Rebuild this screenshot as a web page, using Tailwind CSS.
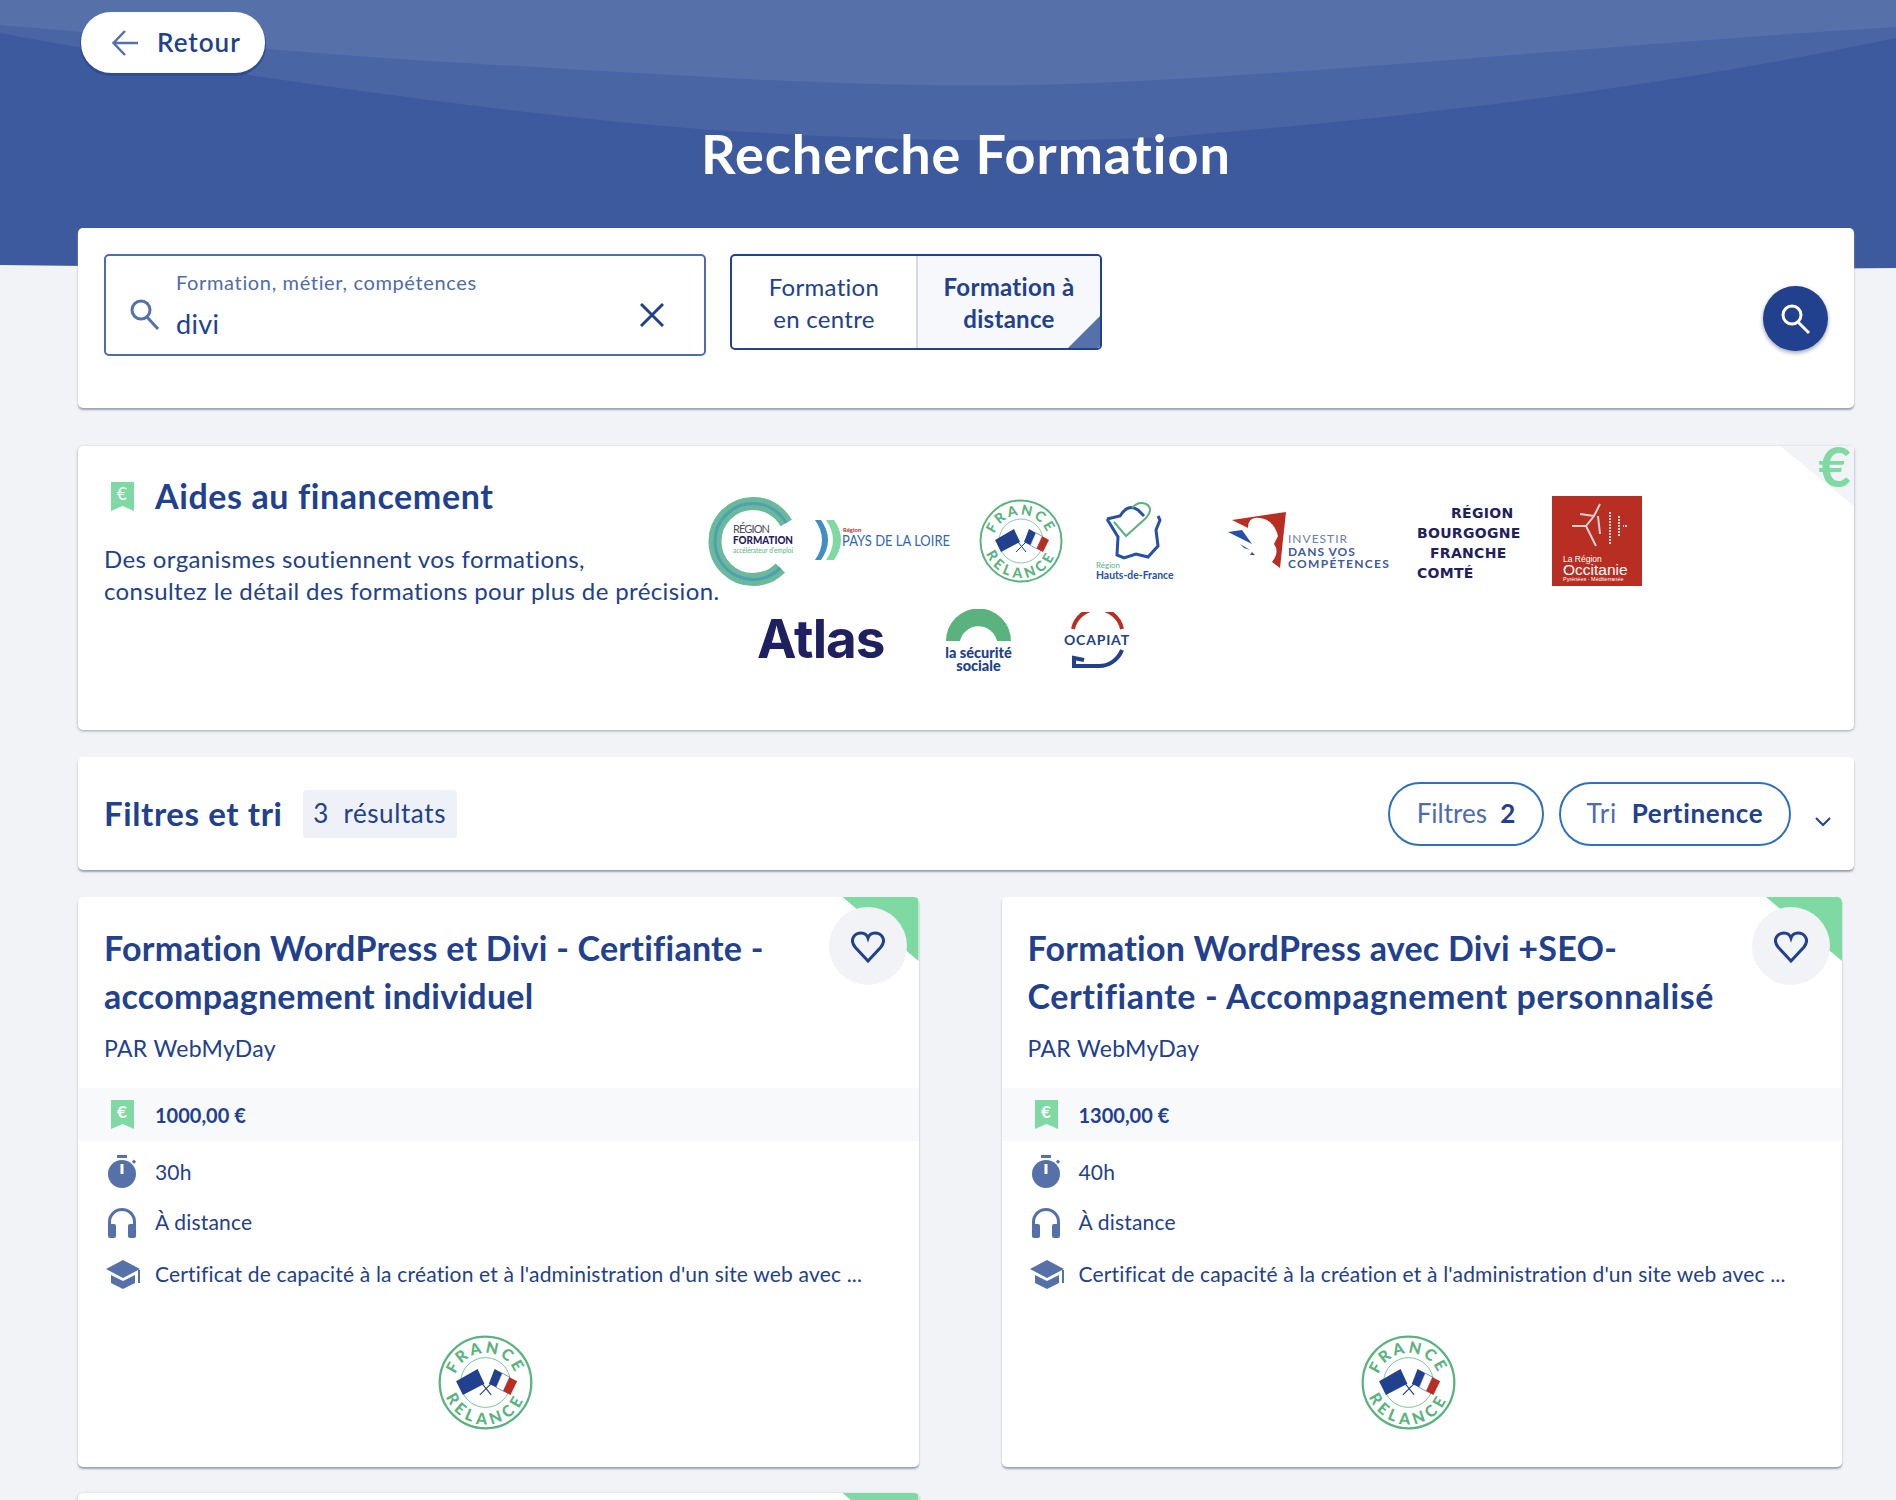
<!DOCTYPE html>
<html lang="fr">
<head>
  <meta charset="UTF-8">
  <meta name="viewport" content="width=device-width, initial-scale=1.0">
  <title>Recherche Formation</title>
  <script src="https://cdn.jsdelivr.net/npm/@tailwindcss/browser@4"></script>
</head>
<body class="bg-[#f1f3f7] font-['Lato',sans-serif] text-[#21408e] [font-variant-ligatures:none]">

  <!-- Icones et logos reutilises -->
  <svg class="hidden" width="0" height="0">
    <defs>
      <symbol id="relance" viewBox="0 0 84 84">
        <circle cx="42" cy="42" r="40.5" fill="#fff" stroke="#5ab37f" stroke-width="2"/>
        <circle cx="42" cy="42" r="22" fill="none" stroke="#5ab37f" stroke-width="0.7"/>
        <path id="arcTop" d="M14 44 A28 28 0 0 1 70 44" fill="none"/>
        <path id="arcBottom" d="M5 42 A37 37 0 0 0 79 42" fill="none"/>
        <text font-family="Lato, sans-serif" font-size="14" font-weight="900" fill="#5ab37f" letter-spacing="2.4"><textPath href="#arcTop" startOffset="50%" text-anchor="middle">FRANCE</textPath></text>
        <text font-family="Lato, sans-serif" font-size="14" font-weight="900" fill="#5ab37f" letter-spacing="4"><textPath href="#arcBottom" startOffset="50%" text-anchor="middle">RELANCE</textPath></text>
        <path d="M35 30 L41 43 L22 53 L16 41 Z" fill="#21408e"/>
        <path d="M45 43 L50 30 L56.7 33.7 L51.3 46.3 Z" fill="#21408e"/>
        <path d="M51.3 46.3 L56.7 33.7 L63.3 37.3 L57.7 49.7 Z" fill="#fff" stroke="#21408e" stroke-width="0.5"/>
        <path d="M57.7 49.7 L63.3 37.3 L70 41 L64 53 Z" fill="#b92e22"/>
        <path d="M47 43 L37 53 M39 43 L47 53" stroke="#21408e" stroke-width="1"/>
      </symbol>
      <symbol id="bookmark" viewBox="0 0 23 29">
        <path d="M0 0 H23 V29 L11.5 24 L0 29 Z" fill="#7fd9a2"/>
        <text x="11" y="18" text-anchor="middle" font-family="Lato, sans-serif" font-size="17" fill="#fff">€</text>
      </symbol>
      <symbol id="stopwatch" viewBox="0 0 30 34">
        <rect x="9" y="0" width="10" height="3" fill="#5670aa"/>
        <circle cx="14" cy="19" r="14" fill="#5670aa"/>
        <rect x="25" y="5" width="3" height="3" fill="#5670aa" transform="rotate(45 26 6)"/>
        <rect x="12.5" y="9" width="3" height="10" fill="#fff"/>
      </symbol>
      <symbol id="headphones" viewBox="0 0 30 31">
        <path d="M2.5 19 V15 A12.5 12.5 0 0 1 27.5 15 V19" fill="none" stroke="#5670aa" stroke-width="3"/>
        <rect x="1" y="17" width="8" height="14" rx="2" fill="#5670aa"/>
        <rect x="21" y="17" width="8" height="14" rx="2" fill="#5670aa"/>
      </symbol>
      <symbol id="cap" viewBox="0 0 36 29">
        <path d="M18 0 L35 9 L18 18 L1 9 Z" fill="#5670aa"/>
        <path d="M6 15 L18 21 L30 15 V23 L18 29 L6 23 Z" fill="#5670aa"/>
        <rect x="33" y="10" width="2" height="13" fill="#5670aa"/>
      </symbol>
    </defs>
  </svg>

  <div class="relative h-[1500px] overflow-hidden">

    <!-- Fond du bandeau -->
    <svg class="absolute top-0 left-0" width="1896" height="272" viewBox="0 0 1896 272">
      <path d="M0 0 H1896 V268 Q948 276 0 265 Z" fill="#3e5a9e"/>
      <path d="M0 33 C120 55 260 80 535 113 C760 140 1000 145 1171 137 C1400 118 1650 90 1896 38 V0 H0 Z" fill="#4a65a4"/>
      <path d="M0 25 C180 40 300 55 535 67 C720 78 900 90 1070 84 C1300 76 1600 45 1896 27 V0 H0 Z" fill="#5670aa"/>
    </svg>

    <main class="relative px-[78px] pr-[42px]">

      <!-- Retour -->
      <div class="pt-[12px] pl-[3px]">
        <button class="flex items-center w-[184px] h-[61px] pl-[31px] gap-[19px] bg-white rounded-[30px] shadow-[0_2px_0_1px_#2f4c93]">
          <svg width="26" height="26" viewBox="0 0 26 26" fill="none" stroke="#5670aa" stroke-width="2.5"><path d="M13 1 L1.5 13 L13 25 M2 13 H26"/></svg>
          <span class="text-[26px] font-semibold tracking-[1px]">Retour</span>
        </button>
      </div>

      <h1 class="mt-[46px] w-[1776px] text-center text-white text-[54px] leading-[70px] font-bold tracking-[0.95px]">Recherche Formation</h1>

      <!-- Recherche -->
      <section class="mt-[39px] w-[1776px] h-[180px] bg-white rounded-[5px] shadow-[0_2px_2px_#9ba2b3] p-[26px] flex items-start relative">
        <div class="w-[602px] h-[102px] border-2 border-[#4d6bad] rounded-[5px] flex items-center pl-[24px] pr-[40px]">
          <svg class="mt-[20px]" width="30" height="32" viewBox="0 0 30 32" fill="none" stroke="#5670aa" stroke-width="3"><circle cx="11" cy="11" r="9"/><path d="M17 18 L28 30"/></svg>
          <div class="ml-[16px] flex-1">
            <div class="text-[20px] leading-[24px] text-[#4d6bad] tracking-[0.65px]">Formation, métier, compétences</div>
            <div class="mt-[13px] text-[27px] leading-[34px] tracking-[0.3px]">divi</div>
          </div>
          <svg class="mt-[20px]" width="24" height="24" viewBox="0 0 24 24" fill="none" stroke="#21408e" stroke-width="3"><path d="M1 1 L23 23 M23 1 L1 23"/></svg>
        </div>
        <div class="ml-[24px] w-[372px] h-[96px] border-2 border-[#21408e] rounded-[5px] flex overflow-hidden text-[24px] leading-[32px] text-center tracking-[0.3px]">
          <div class="w-[186px] pt-[2px] flex items-center justify-center border-r-2 border-[#d5d9e4]">Formation<br>en centre</div>
          <div class="flex-1 pt-[2px] flex items-center justify-center bg-[#f7f8fb] font-bold relative">Formation à<br>distance
            <span class="absolute right-0 bottom-0 w-[32px] h-[32px] bg-[#5670aa] [clip-path:polygon(100%_0,100%_100%,0_100%)]"></span>
          </div>
        </div>
        <button class="ml-auto mt-[32px] w-[65px] h-[65px] rounded-full bg-[#21408e] shadow-[0_2px_4px_#9ba2b3] flex items-center justify-center">
          <svg width="32" height="32" viewBox="0 0 32 32" fill="none" stroke="#fff" stroke-width="3"><circle cx="12" cy="12" r="9"/><path d="M18 19 L29 30"/></svg>
        </button>
      </section>

      <!-- Aides au financement -->
      <section class="mt-[38px] w-[1776px] h-[284px] bg-white rounded-[5px] shadow-[0_1px_3px_#9ba2b3] relative flex pl-[26px]">
        <span class="absolute right-0 top-0 w-[74px] h-[60px] bg-[#f1f3f7] [clip-path:polygon(0_0,100%_0,100%_100%)]"></span>
        <span class="absolute right-[3px] top-[-7px] text-[#7fd9a2] text-[56px] leading-[54px] font-bold">€</span>
        <div class="w-[604px] shrink-0">
          <div class="mt-[30px] flex items-center">
            <svg class="ml-[7px]" width="23" height="29"><use href="#bookmark"/></svg>
            <h2 class="ml-[21px] text-[34px] leading-[40px] font-bold tracking-[0.6px]">Aides au financement</h2>
          </div>
          <p class="mt-[27px] text-[24px] leading-[32px] whitespace-nowrap tracking-[0.38px]">Des organismes soutiennent vos formations,<br>consultez le détail des formations pour plus de précision.</p>
        </div>
        <div>
          <!-- Premiere ligne -->
          <div class="mt-[50px] flex items-start">
            <svg width="90" height="91" viewBox="0 0 90 91">
              <circle cx="45" cy="45.5" r="38" fill="none" stroke="#6ab99a" stroke-width="13" stroke-dasharray="190 49" transform="rotate(44 45 45.5)"/>
              <circle cx="45" cy="45.5" r="38" fill="none" stroke="#3f8fc4" stroke-opacity="0.6" stroke-width="3" stroke-dasharray="190 49" transform="rotate(44 45 45.5)"/>
              <text x="25" y="37" font-family="Lato, sans-serif" font-size="11" fill="#4a4f66" textLength="37">RÉGION</text>
              <text x="25" y="48" font-family="Lato, sans-serif" font-size="10.5" font-weight="900" fill="#1e2060" textLength="60" lengthAdjust="spacingAndGlyphs">FORMATION</text>
              <text x="25" y="57" font-family="Lato, sans-serif" font-size="7" fill="#5ab37f" textLength="60" lengthAdjust="spacingAndGlyphs">accélérateur d'emploi</text>
            </svg>
            <svg class="ml-[15px] mt-[24px]" width="140" height="40" viewBox="0 0 140 40">
              <path d="M2 0 Q16 20 2 40 H8 Q22 20 8 0 Z" fill="#3f8fc4"/>
              <path d="M13 0 Q27 20 13 40 H21 Q35 20 21 0 Z" fill="#7fd9a2"/>
              <text x="30" y="12" font-family="Lato, sans-serif" font-size="6" font-weight="700" fill="#b92e22">Région</text>
              <text x="29" y="26" font-family="Lato, sans-serif" font-size="15" fill="#3368b3" textLength="108" lengthAdjust="spacingAndGlyphs">PAYS DE LA LOIRE</text>
            </svg>
            <svg class="ml-[26px] mt-[3px]" width="84" height="84"><use href="#relance"/></svg>
            <svg class="ml-[33px] mt-[6px]" width="80" height="80" viewBox="0 0 80 80">
              <path d="M11 17 L24 14 Q32 1 42 8 L48 14 M62 14 L64 18 L60 28 L62 44 L52 55 L40 52 L28 56 L21 53 L22 35 L11 17" fill="none" stroke="#2650a8" stroke-width="3"/>
              <path d="M18 20 L30 34 L50 16 Q58 6 50 2 Q42 -1 36 6" fill="none" stroke="#5ab37f" stroke-width="2"/>
              <text x="0" y="66" font-family="Lato, sans-serif" font-size="8" fill="#5ab37f">Région</text>
              <text x="0" y="77" font-family="Lato, sans-serif" font-size="10.4" font-weight="700" fill="#2650a8">Hauts-de-France</text>
            </svg>
            <svg class="ml-[52px] mt-[16px]" width="165" height="56" viewBox="0 0 165 56">
              <path d="M4 8 L58 0 L52 56 L44 50 Q52 40 46 32 L50 24 Q46 8 32 6 Q20 4 20 16 Z" fill="#b92e22"/>
              <path d="M0 20 L14 18 L24 32 Z" fill="#2650a8"/>
              <path d="M12 32 L22 38 L16 36 Z M24 40 L27 43 L22 43 Z" fill="#2650a8"/>
              <text x="60" y="31" font-family="Lato, sans-serif" font-size="12" letter-spacing="1" fill="#6a7ea8">INVESTIR</text>
              <text x="60" y="44" font-family="Lato, sans-serif" font-size="12" font-weight="700" letter-spacing="1" fill="#3d5a9e">DANS VOS</text>
              <text x="60" y="56" font-family="Lato, sans-serif" font-size="12" font-weight="700" letter-spacing="1.3" fill="#3d5a9e">COMPÉTENCES</text>
            </svg>
            <div class="ml-[24px] mt-[7px] w-[102px] font-['DejaVu_Sans',sans-serif] font-bold text-[14px] leading-[20px] text-[#1e2060] tracking-[0.3px]">
              <div class="pl-[34px]">RÉGION</div>
              <div>BOURGOGNE</div>
              <div class="pl-[13px]">FRANCHE</div>
              <div>COMTÉ</div>
            </div>
            <div class="ml-[33px] w-[90px] h-[90px] bg-[#b92e22] text-white relative">
              <svg class="absolute left-[18px] top-[6px]" width="58" height="50" viewBox="0 0 58 50" fill="none" stroke="#d9d3d0" stroke-width="2">
                <path d="M2 24 L16 24 L24 14 L30 2 M24 14 L10 12 M16 24 L26 44 M28 14 L30 32"/>
                <path d="M40 10 V42 M49 14 V34 M57 24 H53" stroke-dasharray="2 1"/>
              </svg>
              <div class="absolute left-[11px] top-[58px] text-[8.5px] leading-[10px] font-['Liberation_Sans',sans-serif]">La Région</div>
              <div class="absolute left-[11px] top-[66px] text-[15.5px] leading-[16px] font-['Liberation_Sans',sans-serif]">Occitanie</div>
              <div class="absolute left-[11px] top-[80px] text-[5.5px] leading-[7px] whitespace-nowrap font-['Liberation_Sans',sans-serif]">Pyrénées · Méditerranée</div>
            </div>
          </div>
          <!-- Deuxieme ligne -->
          <div class="mt-[22px] flex items-start">
            <div class="ml-[49px] mt-[2px] text-[#1e2060] text-[53px] leading-[56px] font-bold tracking-[-1px] font-['Inter',sans-serif]">Atlas</div>
            <svg class="ml-[61px]" width="67" height="64" viewBox="0 0 67 64">
              <path d="M1 32 A32 32 0 0 1 66 32 H52 A19 19 0 0 0 15 32 Z" fill="#5ab37f"/>
              <text x="33.5" y="49" text-anchor="middle" font-family="Lato, sans-serif" font-size="14.5" font-weight="900" fill="#21408e">la sécurité</text>
              <text x="33.5" y="62" text-anchor="middle" font-family="Lato, sans-serif" font-size="14.5" font-weight="900" fill="#21408e">sociale</text>
            </svg>
            <svg class="ml-[52px] mt-[3px]" width="67" height="56" viewBox="0 0 67 56">
              <path d="M9 17 A25 25 0 0 1 58 17" fill="none" stroke="#b92e22" stroke-width="4"/>
              <path d="M58 38 A25 25 0 0 1 34 54 L10 54 L10 46 L20 48" fill="none" stroke="#21408e" stroke-width="4"/>
              <text x="0" y="33" font-family="Lato, sans-serif" font-size="14" font-weight="700" letter-spacing="0.8" fill="#21408e">OCAPIAT</text>
            </svg>
          </div>
        </div>
      </section>

      <!-- Filtres et tri -->
      <section class="mt-[27px] w-[1776px] h-[113px] bg-white rounded-[5px] shadow-[0_2px_2px_#9ba2b3] flex items-center pl-[26px] pr-[23px]">
        <h2 class="text-[33px] font-bold tracking-[0.6px]">Filtres et tri</h2>
        <span class="ml-[20px] w-[154px] h-[48px] flex items-center justify-center bg-[#eef2f8] rounded-[4px] text-[26px] whitespace-pre tracking-[0.6px]">3  résultats</span>
        <button class="ml-auto w-[156px] h-[64px] rounded-[32px] border-2 border-[#2f6fc0] text-[26px] whitespace-pre text-[#4d6bad]">Filtres  <b class="text-[#21408e]">2</b></button>
        <button class="ml-[15px] w-[232px] h-[64px] rounded-[32px] border-2 border-[#2f6fc0] text-[26px] whitespace-pre text-[#4d6bad] tracking-[0.7px]">Tri  <b class="text-[#21408e]">Pertinence</b></button>
        <svg class="ml-[24px] mt-[16px]" width="16" height="10" viewBox="0 0 16 10" fill="none" stroke="#21408e" stroke-width="2"><path d="M1 1 L8 8 L15 1"/></svg>
      </section>

      <!-- Resultats -->
      <div class="mt-[27px] grid grid-cols-2 gap-x-[83px] gap-y-[26px] w-[1764px]">

        <article class="relative h-[570px] bg-white rounded-[5px] shadow-[0_2px_2px_#9ba2b3] overflow-hidden">
          <span class="absolute right-0 top-0 w-[76px] h-[64px] bg-[#7fd9a2] [clip-path:polygon(0_0,100%_0,100%_100%)]"></span>
          <span class="absolute right-[12px] top-[10px] w-[78px] h-[78px] rounded-full bg-[#f1f3f7] flex items-center justify-center">
            <svg class="mt-[2px]" width="34" height="32" viewBox="0 0 34 32" fill="none" stroke="#21408e" stroke-width="3"><path d="M17 30 L4 16 C-2 8 4 2 10 2 C13 2 16 4 17 7 C18 4 21 2 24 2 C30 2 36 8 30 16 Z"/></svg>
          </span>
          <h3 class="pt-[27px] pl-[26px] text-[34px] leading-[48px] font-bold tracking-[0.25px]">Formation WordPress et Divi - Certifiante -<br>accompagnement individuel</h3>
          <p class="mt-[13px] pl-[26px] text-[23px] leading-[30px] tracking-[0.3px]">PAR WebMyDay</p>
          <div class="mt-[25px] h-[53px] bg-[#f8f9fb] pl-[33px] flex items-center text-[20px] font-bold"><svg width="23" height="29"><use href="#bookmark"/></svg><span class="ml-[21px]">1000,00 €</span></div>
          <div class="mt-[13px] h-[36px] pl-[30px] flex items-center text-[21px] tracking-[0.18px]"><svg width="30" height="34"><use href="#stopwatch"/></svg><span class="ml-[17px]">30h</span></div>
          <div class="mt-[14px] h-[36px] pl-[29px] flex items-center text-[21px] tracking-[0.18px]"><svg width="30" height="31"><use href="#headphones"/></svg><span class="ml-[18px]">À distance</span></div>
          <div class="mt-[16px] h-[36px] pl-[27px] flex items-center text-[21px] tracking-[0.18px]"><svg width="36" height="29"><use href="#cap"/></svg><span class="ml-[14px] whitespace-nowrap">Certificat de capacité à la création et à l'administration d'un site web avec ...</span></div>
          <div class="mt-[43px] flex justify-center"><svg class="ml-[-26px]" width="95" height="95"><use href="#relance"/></svg></div>
        </article>

        <article class="relative h-[570px] bg-white rounded-[5px] shadow-[0_2px_2px_#9ba2b3] overflow-hidden">
          <span class="absolute right-0 top-0 w-[76px] h-[64px] bg-[#7fd9a2] [clip-path:polygon(0_0,100%_0,100%_100%)]"></span>
          <span class="absolute right-[12px] top-[10px] w-[78px] h-[78px] rounded-full bg-[#f1f3f7] flex items-center justify-center">
            <svg class="mt-[2px]" width="34" height="32" viewBox="0 0 34 32" fill="none" stroke="#21408e" stroke-width="3"><path d="M17 30 L4 16 C-2 8 4 2 10 2 C13 2 16 4 17 7 C18 4 21 2 24 2 C30 2 36 8 30 16 Z"/></svg>
          </span>
          <h3 class="pt-[27px] pl-[26px] text-[34px] leading-[48px] font-bold tracking-[0.25px]">Formation WordPress avec Divi +SEO-<br><span class="tracking-[0.6px]">Certifiante - Accompagnement personnalisé</span></h3>
          <p class="mt-[13px] pl-[26px] text-[23px] leading-[30px] tracking-[0.3px]">PAR WebMyDay</p>
          <div class="mt-[25px] h-[53px] bg-[#f8f9fb] pl-[33px] flex items-center text-[20px] font-bold"><svg width="23" height="29"><use href="#bookmark"/></svg><span class="ml-[21px]">1300,00 €</span></div>
          <div class="mt-[13px] h-[36px] pl-[30px] flex items-center text-[21px] tracking-[0.18px]"><svg width="30" height="34"><use href="#stopwatch"/></svg><span class="ml-[17px]">40h</span></div>
          <div class="mt-[14px] h-[36px] pl-[29px] flex items-center text-[21px] tracking-[0.18px]"><svg width="30" height="31"><use href="#headphones"/></svg><span class="ml-[18px]">À distance</span></div>
          <div class="mt-[16px] h-[36px] pl-[27px] flex items-center text-[21px] tracking-[0.18px]"><svg width="36" height="29"><use href="#cap"/></svg><span class="ml-[14px] whitespace-nowrap">Certificat de capacité à la création et à l'administration d'un site web avec ...</span></div>
          <div class="mt-[43px] flex justify-center"><svg class="ml-[-26px]" width="95" height="95"><use href="#relance"/></svg></div>
        </article>

        <article class="relative h-[570px] bg-white rounded-[5px] shadow-[0_1px_3px_#9ba2b3] overflow-hidden">
          <span class="absolute right-0 top-0 w-[76px] h-[64px] bg-[#7fd9a2] [clip-path:polygon(0_0,100%_0,100%_100%)]"></span>
        </article>
      </div>
    </main>
  </div>

</body>
</html>
